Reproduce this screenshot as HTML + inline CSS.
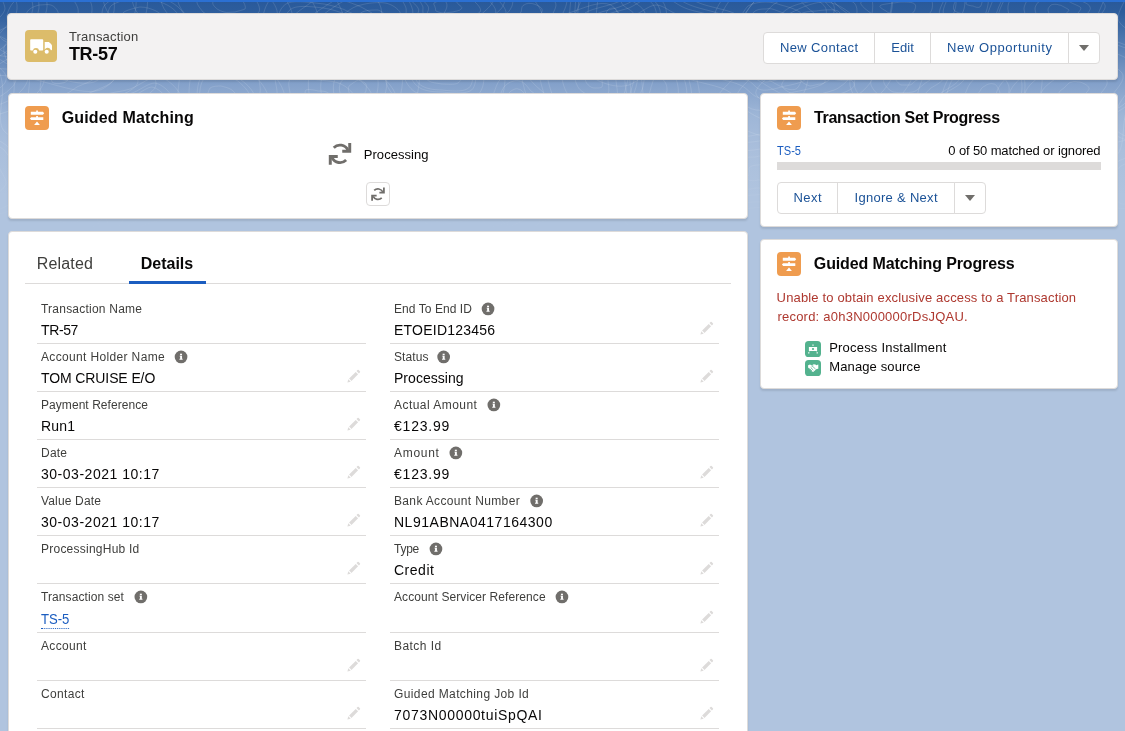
<!DOCTYPE html>
<html lang="en"><head><meta charset="utf-8"><title>TR-57 | Transaction</title>
<style>
html,body{margin:0;padding:0}
body{width:1125px;height:731px;overflow:hidden;position:relative;background:#B0C4DF;font-family:"Liberation Sans", sans-serif;color:#080707}
#page{position:absolute;left:0;top:0;width:1125px;height:731px;overflow:hidden;will-change:transform;background:#B0C4DF}
.abs{position:absolute}
.t{white-space:nowrap}
.band{left:0;top:0;width:1125px;height:200px;background:linear-gradient(to bottom,#29599A 0,#2D5D9C 12px,#4E78AF 40px,#84A1CA 84px,#9EB6D7 115px,#AABFDC 150px,#B0C4DF 195px)}
.topbar{left:0;top:0;width:1125px;height:2px;background:#2B70D3}
.card{background:#fff;border-radius:4px;box-shadow:0 2px 2px 0 rgba(0,0,0,.10);border:1px solid #dddbda;box-sizing:border-box}
.btn{box-sizing:border-box;background:#fff;border:1px solid #dddbda;color:#1B5297;font-size:13px;text-align:center;height:32px;line-height:30px;white-space:nowrap}
.lab{color:#3e3e3c}
.link{color:#1B5DC0}
.hr{height:1px;background:#dddbda}
.tri{width:0;height:0;border-left:5px solid transparent;border-right:5px solid transparent;border-top:6.500px solid #706E6B}
</style></head><body><div id="page">
<div class="abs band"></div>
<svg class="abs" style="left:0;top:0" width="1125" height="240" viewBox="0 0 1125 240" fill="none" stroke="url(#pg)" stroke-width="1"><defs><linearGradient id="pg" gradientUnits="userSpaceOnUse" x1="0" y1="0" x2="0" y2="235"><stop offset="0" stop-color="#fff" stop-opacity=".12"/><stop offset=".5" stop-color="#fff" stop-opacity=".12"/><stop offset="1" stop-color="#fff" stop-opacity="0"/></linearGradient></defs><path d="M-21 7C-20 5 -21 -1 -20 -2C-19 -3 -16 0 -14 1C-12 1 -10 0 -9 2C-7 3 -5 7 -5 10C-5 12 -8 15 -10 16C-11 18 -12 18 -14 19C-15 20 -17 21 -19 20C-20 19 -21 16 -21 14C-22 12 -21 10 -21 7zM-26 4C-26 -1 -27 -12 -25 -14C-23 -16 -17 -9 -13 -8C-10 -7 -6 -10 -3 -7C0 -4 5 4 5 9C4 14 -2 19 -5 22C-7 26 -10 27 -13 28C-15 29 -20 32 -22 30C-25 28 -27 22 -28 18C-28 13 -27 10 -26 4zM-34 1C-33 -8 -35 -26 -31 -30C-28 -33 -18 -22 -12 -20C-6 -18 1 -22 6 -18C11 -13 18 0 17 9C17 17 7 25 2 31C-2 36 -6 38 -11 40C-16 42 -23 46 -27 43C-31 40 -35 30 -36 23C-37 15 -35 9 -34 1zM-42 -4C-41 -16 -44 -43 -39 -48C-34 -53 -20 -37 -11 -34C-2 -31 8 -37 15 -30C22 -23 33 -4 33 8C32 20 17 33 11 40C4 48 -2 51 -9 54C-16 57 -26 63 -32 59C-39 55 -44 39 -46 28C-47 18 -44 9 -42 -4zM-46 -6C-45 -20 -48 -51 -42 -57C-36 -62 -20 -44 -10 -41C0 -37 11 -44 20 -36C28 -28 40 -6 39 8C38 21 22 36 14 44C6 53 0 56 -8 60C-16 63 -28 71 -35 66C-42 61 -48 43 -50 31C-52 19 -48 9 -46 -6zM-51 -8C-49 -24 -53 -59 -46 -66C-39 -72 -21 -52 -9 -48C2 -44 15 -52 24 -43C34 -33 48 -8 47 7C46 23 27 39 18 49C9 59 2 63 -7 67C-16 71 -30 79 -38 73C-46 68 -53 47 -55 34C-57 20 -52 9 -51 -8zM-34 76C-32 75 -30 72 -28 72C-26 72 -22 74 -21 75C-19 76 -18 77 -18 78C-18 79 -18 80 -19 81C-20 82 -22 83 -24 84C-26 85 -31 86 -33 86C-35 85 -36 83 -37 81C-39 80 -42 79 -41 78C-41 77 -36 77 -34 76zM-41 72C-37 70 -33 64 -28 64C-23 63 -16 68 -12 70C-9 73 -7 75 -6 77C-6 79 -7 82 -9 84C-11 86 -15 88 -20 90C-25 91 -34 94 -39 93C-44 92 -45 87 -48 84C-51 82 -58 79 -56 77C-55 75 -46 74 -41 72zM-49 68C-41 64 -36 56 -28 55C-21 55 -9 62 -4 66C2 69 5 73 6 76C7 80 5 84 1 87C-2 90 -7 93 -15 96C-23 98 -38 102 -45 101C-52 99 -54 91 -58 87C-63 83 -74 79 -72 75C-70 72 -56 71 -49 68zM-55 64C-45 60 -38 49 -28 48C-18 48 -4 57 4 62C11 66 15 71 16 75C17 80 15 85 10 89C6 93 -1 98 -11 101C-21 104 -41 109 -50 108C-60 106 -62 95 -68 90C-74 84 -88 79 -86 74C-83 70 -64 69 -55 64zM-62 60C-50 55 -41 40 -28 40C-16 39 3 51 12 57C21 63 26 69 28 74C29 80 26 86 20 92C15 97 7 103 -6 106C-19 110 -44 118 -56 115C-68 113 -71 99 -78 92C-86 85 -104 78 -101 73C-98 68 -74 66 -62 60zM-72 55C-56 48 -44 29 -28 28C-12 27 12 43 24 50C36 58 43 66 44 73C46 81 42 89 34 96C27 102 17 109 0 114C-16 120 -49 129 -65 126C-80 123 -84 106 -93 96C-103 87 -126 78 -122 71C-119 64 -88 62 -72 55zM-23 165C-20 165 -17 165 -15 167C-13 168 -12 170 -11 172C-10 174 -7 177 -8 179C-9 182 -12 184 -15 185C-17 186 -21 184 -23 183C-26 183 -29 183 -31 181C-33 180 -33 177 -33 175C-33 172 -33 168 -32 167C-30 165 -25 165 -23 165zM-24 154C-19 154 -12 155 -8 158C-4 161 -2 165 0 169C2 174 7 180 6 184C4 189 -3 194 -8 195C-13 197 -20 194 -26 192C-31 191 -38 191 -41 188C-45 185 -46 179 -46 174C-46 169 -47 162 -43 158C-40 155 -30 154 -24 154zM-27 140C-17 140 -6 143 0 147C7 151 10 159 14 166C17 173 25 183 23 190C21 197 9 206 -0 209C-9 211 -19 205 -29 203C-38 201 -49 202 -55 197C-60 192 -62 182 -62 174C-63 165 -63 153 -57 147C-52 142 -36 140 -27 140zM-27 135C-16 135 -4 138 3 143C11 148 14 156 18 165C23 173 32 184 29 192C27 200 13 211 3 213C-7 216 -19 210 -30 207C-40 205 -53 205 -59 200C-66 194 -68 183 -68 173C-69 164 -69 150 -63 143C-56 137 -38 135 -27 135zM58 12C59 14 58 17 57 20C56 23 54 27 51 28C48 28 43 26 40 26C36 25 32 25 29 24C27 22 26 19 26 16C26 13 28 10 30 9C32 7 36 6 39 5C43 5 48 4 51 5C54 6 57 9 58 12zM77 6C80 12 77 19 74 25C72 30 68 39 62 41C56 43 45 39 37 37C29 36 19 37 14 33C9 30 7 22 7 16C8 10 11 4 16 -0C20 -4 29 -6 36 -7C44 -9 55 -11 62 -9C68 -7 75 1 77 6zM91 3C94 11 90 20 87 28C83 36 78 48 70 51C61 54 46 47 35 46C24 44 10 45 3 40C-4 35 -6 24 -6 16C-6 8 -1 -1 5 -6C12 -12 24 -14 34 -16C45 -18 60 -22 69 -19C79 -15 88 -5 91 3zM113 -3C117 8 112 22 106 33C101 45 94 62 82 67C70 71 48 61 32 59C16 56 -4 58 -14 51C-24 43 -28 27 -27 16C-27 5 -20 -9 -11 -16C-1 -24 15 -28 31 -30C46 -33 67 -38 81 -34C95 -29 109 -14 113 -3zM134 -9C140 6 132 23 126 38C119 53 110 76 94 82C78 87 50 75 29 71C8 68 -18 70 -30 61C-43 52 -49 31 -48 16C-47 2 -39 -16 -26 -26C-14 -36 8 -40 27 -44C47 -48 75 -54 93 -49C110 -43 129 -23 134 -9zM145 -12C152 5 143 24 136 41C128 58 118 83 100 90C82 96 50 82 27 78C4 74 -25 77 -39 66C-54 56 -60 32 -59 16C-58 -0 -49 -20 -35 -31C-21 -42 3 -47 26 -52C48 -56 79 -63 99 -57C119 -50 139 -28 145 -12zM62 83C59 84 54 84 52 82C51 81 52 76 52 74C52 71 49 68 50 66C51 64 55 63 58 63C61 62 63 62 66 63C68 64 69 66 71 67C73 69 78 72 78 74C78 76 72 78 69 79C67 81 65 83 62 83zM62 95C57 96 45 97 42 93C38 90 42 81 41 75C40 70 35 64 37 60C39 56 48 54 54 53C59 52 65 52 69 53C74 55 77 59 81 62C85 66 96 72 95 77C94 81 83 84 77 87C72 90 68 94 62 95zM63 108C54 110 36 110 31 105C25 100 31 86 29 77C28 69 20 59 23 54C26 48 40 44 49 42C57 41 67 41 74 43C81 46 85 51 91 57C98 63 114 73 114 79C113 85 94 90 86 95C77 100 72 107 63 108zM63 125C50 128 24 128 16 121C8 113 16 93 14 80C12 67 0 53 5 45C10 36 30 31 43 29C55 26 69 26 79 30C90 33 95 41 105 50C115 59 139 73 138 82C136 92 109 99 97 106C84 113 76 123 63 125zM63 138C47 141 15 142 5 132C-5 123 5 97 2 82C0 66 -15 49 -9 38C-3 28 23 21 38 18C53 15 70 15 83 19C96 24 103 34 115 45C128 55 158 73 156 85C154 97 120 106 105 114C89 123 80 135 63 138zM77 193C77 195 76 197 75 198C73 200 71 202 68 202C66 202 62 201 61 199C59 198 58 196 58 194C58 192 58 190 59 189C60 188 62 187 64 186C65 186 67 186 69 186C71 186 74 186 76 187C77 188 77 191 77 193zM88 193C88 197 87 202 83 205C80 208 74 213 70 213C65 213 58 210 54 207C51 204 49 200 48 196C48 193 49 189 51 186C53 184 57 182 60 181C63 179 67 179 71 179C75 179 82 179 85 182C88 184 88 189 88 193zM99 194C98 200 96 206 92 211C87 216 78 223 71 223C64 224 53 219 48 215C42 210 40 203 39 198C38 193 40 187 43 183C46 179 52 177 57 175C62 173 67 172 73 173C79 173 90 173 94 176C99 180 99 188 99 194zM112 195C111 203 109 212 102 219C95 226 83 236 72 236C62 237 47 230 40 224C32 218 29 208 28 201C27 193 29 185 33 180C37 174 45 170 52 168C60 165 67 164 76 165C85 165 100 165 106 170C112 175 113 186 112 195zM130 196C129 207 125 220 116 230C107 240 89 253 75 254C60 255 39 245 29 237C18 228 14 215 12 204C10 194 14 183 20 175C25 167 37 162 47 158C57 155 67 153 79 154C92 154 113 154 121 161C130 168 131 184 130 196zM133 26C132 25 132 23 132 22C132 20 132 18 133 17C135 16 139 15 142 15C144 14 148 16 150 17C152 17 153 19 154 20C154 22 154 23 152 24C151 25 150 27 148 27C146 28 143 28 140 28C138 28 134 27 133 26zM123 30C121 28 122 24 122 21C122 18 121 14 124 12C127 10 135 8 140 7C146 7 152 9 156 11C160 13 163 16 164 19C165 21 163 24 161 26C159 29 156 31 152 32C148 33 143 34 138 33C133 33 126 32 123 30zM110 35C105 32 108 26 108 21C108 16 107 9 112 5C117 2 129 -2 138 -3C147 -3 159 1 165 4C172 7 177 12 179 16C180 21 178 26 174 30C171 33 164 37 158 39C151 41 142 41 134 41C126 40 114 38 110 35zM104 37C99 33 102 26 102 20C102 15 101 7 107 3C112 -2 127 -6 138 -7C148 -7 161 -3 169 1C177 5 183 11 185 16C186 20 183 27 179 31C175 35 168 39 160 41C153 44 142 45 133 44C124 43 110 41 104 37zM135 113C134 112 133 111 133 110C133 109 132 107 133 106C134 105 136 105 138 105C140 104 142 102 144 102C146 102 148 105 148 106C149 107 148 109 147 110C147 111 146 112 145 113C144 114 141 115 140 114C138 114 136 113 135 113zM130 117C128 115 126 113 126 111C125 108 123 105 125 103C127 101 132 102 136 100C139 99 144 94 148 95C152 95 156 100 157 103C159 105 156 108 155 111C154 113 153 116 150 117C148 119 143 121 140 120C136 120 132 118 130 117zM125 121C121 118 119 115 118 111C117 108 115 102 117 100C120 97 127 98 133 96C139 94 147 87 152 87C158 88 165 95 167 99C168 103 164 108 163 112C161 116 159 119 156 122C152 124 145 127 140 126C134 126 128 123 125 121zM122 123C118 120 115 116 114 112C112 108 110 101 113 98C116 95 125 96 132 93C139 91 148 83 155 83C162 84 170 92 172 97C174 102 169 108 167 113C165 117 163 121 159 124C154 127 146 130 139 130C133 130 126 126 122 123zM117 126C112 123 109 118 107 112C105 107 102 99 106 95C110 92 121 92 130 89C139 86 150 76 159 77C167 78 177 88 180 94C182 100 177 108 174 113C171 119 169 125 163 128C157 132 147 135 139 135C132 135 123 130 117 126zM133 179C135 179 138 181 140 183C142 185 145 187 145 189C146 192 144 195 142 197C140 199 138 199 135 200C132 201 128 204 126 204C124 203 123 198 122 196C121 193 119 191 119 188C119 186 121 182 123 180C125 179 130 178 133 179zM133 166C139 167 144 171 148 175C152 179 158 183 158 188C159 193 156 200 152 203C149 206 143 206 138 209C133 211 125 218 120 216C116 215 115 205 112 200C110 195 106 191 106 186C106 180 110 173 114 169C119 166 128 165 133 166zM134 152C143 154 150 161 157 166C163 172 172 179 173 186C174 193 169 204 163 210C158 215 149 215 141 218C133 222 121 232 114 230C107 228 105 213 102 205C98 197 91 191 92 183C92 175 97 163 104 158C111 153 125 151 134 152zM135 142C146 144 155 153 163 160C172 167 182 176 183 185C185 194 178 208 172 214C165 221 154 221 144 225C133 230 118 243 109 241C101 238 98 219 94 209C89 199 81 191 81 180C82 170 88 155 97 149C106 143 124 141 135 142zM235 12C231 12 227 13 224 12C221 11 218 10 216 8C214 6 212 4 213 2C214 0 217 -2 219 -3C222 -4 227 -3 230 -3C234 -2 236 -2 239 -1C241 -0 243 1 244 3C245 5 246 8 245 9C243 10 238 11 235 12zM239 19C232 20 224 20 218 19C213 18 207 15 203 12C200 8 196 4 197 0C199 -3 204 -8 210 -10C215 -11 225 -9 231 -9C237 -8 242 -7 246 -6C251 -4 255 -1 257 2C259 5 261 11 258 13C255 16 246 18 239 19zM244 27C234 29 221 30 212 28C202 26 193 21 187 16C182 11 177 4 178 -2C180 -7 189 -15 198 -18C207 -20 222 -17 231 -16C241 -15 249 -14 256 -11C263 -9 269 -4 272 1C276 6 280 15 275 19C270 23 255 25 244 27zM249 35C235 37 218 38 206 36C193 34 181 27 174 20C166 13 159 4 162 -4C164 -11 176 -22 188 -25C199 -28 219 -24 232 -23C244 -21 255 -20 264 -16C273 -13 282 -7 286 -0C290 6 296 18 290 24C283 30 263 33 249 35zM257 47C237 50 213 53 196 50C178 46 160 36 150 27C139 17 129 4 133 -7C136 -18 153 -33 170 -37C186 -42 214 -36 232 -34C251 -32 266 -30 279 -25C292 -20 304 -12 310 -2C316 7 324 24 315 32C306 41 276 45 257 47zM265 60C239 64 208 68 185 63C162 59 139 46 126 34C112 21 99 4 104 -10C108 -24 130 -44 152 -49C173 -55 209 -48 233 -45C257 -43 277 -41 293 -34C310 -27 326 -16 334 -4C342 9 352 30 340 41C329 51 290 57 265 60zM229 103C230 105 229 108 227 110C226 111 224 111 222 112C220 113 217 115 216 114C215 114 215 109 214 107C214 105 214 104 214 102C214 101 214 98 215 97C217 96 219 96 221 96C222 96 224 96 226 98C227 99 229 101 229 103zM240 102C241 106 239 113 236 116C233 120 228 119 224 121C220 123 214 128 211 126C208 125 209 115 208 110C207 106 207 104 207 100C207 97 208 91 210 88C213 86 218 86 221 86C225 87 229 88 232 90C235 93 239 97 240 102zM252 100C253 107 250 119 246 124C241 129 233 129 227 132C220 134 210 143 205 140C201 137 202 121 201 114C200 107 199 104 199 98C200 92 200 83 204 79C208 75 216 75 222 76C228 76 234 78 239 82C244 86 251 94 252 100zM256 100C257 108 253 120 249 126C244 132 235 132 228 135C220 137 209 147 204 144C199 141 200 123 199 115C198 108 196 104 197 97C197 91 198 80 202 76C207 72 216 72 222 73C229 73 236 75 241 80C247 84 255 92 256 100zM269 99C270 109 265 126 259 134C252 142 240 141 230 145C220 150 205 162 198 158C192 154 193 130 191 119C190 109 188 104 189 95C189 86 190 72 196 66C202 61 214 61 223 61C232 62 241 65 249 71C257 77 267 88 269 99zM285 97C287 111 280 133 271 144C263 154 247 154 234 159C220 164 200 182 191 176C182 170 184 138 182 125C180 111 177 104 178 92C179 80 181 62 188 54C196 47 212 47 224 48C236 49 248 52 258 60C269 68 283 83 285 97zM210 177C213 177 214 178 216 179C218 180 222 180 223 181C224 183 221 185 220 186C220 188 220 190 218 191C216 192 212 193 210 193C207 192 206 190 205 188C204 187 203 186 203 184C202 182 201 179 203 178C204 177 208 177 210 177zM208 169C214 169 217 171 221 173C226 174 235 175 237 178C238 181 233 185 231 189C229 193 229 198 225 200C221 203 212 205 207 204C202 203 198 197 195 193C193 190 191 188 191 184C190 180 188 174 191 171C194 169 203 168 208 169zM207 160C214 161 219 165 226 167C234 169 247 171 250 175C252 179 244 186 241 192C238 197 238 205 232 209C225 212 211 216 204 214C196 212 191 203 187 198C183 193 181 189 179 184C178 178 175 168 179 164C184 160 199 160 207 160zM206 158C215 158 220 162 228 165C236 168 252 169 255 174C257 178 248 186 245 193C241 199 241 208 234 212C227 216 211 220 203 218C194 216 188 206 184 200C179 194 177 190 175 184C174 177 170 166 175 162C180 157 197 157 206 158zM328 24C330 25 332 26 332 27C332 28 330 30 328 31C327 31 325 31 323 32C321 33 318 35 315 35C313 35 311 32 310 31C309 29 310 28 310 27C311 25 311 23 313 22C315 21 319 22 322 22C324 23 326 23 328 24zM336 20C339 21 344 24 345 27C345 29 339 32 336 34C333 35 330 35 326 37C321 38 314 43 309 43C305 42 300 37 299 34C297 31 297 28 298 25C299 22 300 17 304 15C308 14 317 15 322 16C328 17 332 18 336 20zM345 14C351 17 359 22 359 26C359 29 351 34 346 37C341 40 336 40 329 42C321 45 309 52 302 52C295 51 288 43 285 38C282 33 283 28 284 23C285 18 287 10 293 8C300 5 315 7 323 8C332 9 339 12 345 14zM349 12C357 15 367 21 367 25C367 30 357 35 351 39C345 42 339 42 330 45C321 48 307 57 298 56C289 56 281 46 277 40C274 34 275 28 277 22C278 16 280 6 288 3C296 0 314 3 324 4C334 6 342 8 349 12zM359 6C369 11 382 18 382 24C383 30 369 38 361 42C353 47 345 47 333 51C322 55 302 67 290 66C279 65 267 51 263 44C258 36 259 28 262 20C264 12 266 -1 277 -5C287 -9 311 -5 325 -4C338 -2 349 2 359 6zM306 98C306 96 304 92 306 90C308 89 315 90 318 91C322 91 326 91 328 93C331 94 333 96 335 98C336 101 337 105 335 106C333 108 327 108 323 109C319 110 314 112 311 111C308 111 305 107 304 105C303 103 305 101 306 98zM290 97C291 91 286 82 291 79C296 76 310 79 319 80C327 81 335 81 341 84C347 87 352 91 355 97C357 102 359 110 355 114C351 118 338 118 329 120C320 122 309 127 302 125C295 124 289 115 287 111C285 106 290 102 290 97zM277 95C278 87 271 73 278 68C285 64 307 69 319 70C332 71 343 72 352 76C361 80 369 87 372 95C376 102 379 115 373 121C367 127 347 127 334 130C321 133 305 140 294 138C284 135 275 123 272 116C269 109 276 103 277 95zM260 93C262 82 251 61 261 56C271 50 302 56 320 57C337 59 353 60 366 66C378 72 390 82 395 93C400 103 405 121 396 130C387 138 359 138 341 142C322 146 299 157 285 153C270 150 257 132 253 122C249 112 259 104 260 93zM288 190C288 189 289 187 291 186C293 185 296 184 298 184C301 185 304 186 305 188C306 189 306 191 306 192C306 194 306 196 304 197C303 198 300 199 298 199C295 200 291 200 289 199C288 198 288 195 288 194C288 192 287 191 288 190zM280 188C281 185 283 182 286 180C290 178 296 177 301 177C305 178 311 181 313 183C316 186 315 189 315 192C315 195 315 199 312 201C309 203 304 205 299 206C294 207 286 207 283 205C280 204 281 198 280 195C280 192 279 190 280 188zM270 185C271 181 274 176 280 173C285 170 296 167 304 168C311 168 320 174 324 178C328 182 328 188 327 193C327 197 327 203 322 207C318 211 309 213 301 215C293 216 280 217 275 214C270 211 271 202 270 197C269 193 268 189 270 185zM265 184C267 179 270 173 277 169C284 166 297 162 305 163C314 164 325 170 329 175C334 180 333 187 333 193C333 198 332 205 327 210C322 214 312 217 302 219C293 220 277 221 271 218C265 214 267 204 266 198C265 193 263 189 265 184zM246 179C249 171 254 161 265 155C276 150 297 144 311 145C325 147 342 157 350 165C357 173 356 184 356 193C355 202 354 213 346 220C338 227 321 233 306 235C291 237 266 239 256 234C246 228 249 211 247 202C245 193 243 187 246 179zM385 15C386 16 384 18 383 19C382 21 381 22 378 23C376 24 372 25 369 25C365 25 359 25 357 24C355 23 354 20 354 19C354 17 357 16 359 15C360 13 362 12 365 11C369 10 375 10 378 10C381 11 384 13 385 15zM400 12C401 15 397 18 395 21C393 23 391 26 386 28C382 29 375 31 368 32C361 32 350 32 345 30C340 27 338 22 339 19C339 16 344 14 348 11C351 9 355 6 361 5C367 3 379 2 385 3C392 4 398 9 400 12zM418 8C421 12 414 18 411 22C407 27 403 31 396 34C389 37 378 40 367 40C355 41 337 40 329 37C321 33 319 25 320 20C320 16 328 11 334 7C340 3 346 -1 356 -3C366 -6 384 -8 395 -6C405 -5 415 3 418 8zM428 6C431 11 423 18 419 23C415 28 410 33 401 37C392 40 379 44 366 45C353 45 330 44 321 40C311 36 308 27 309 21C310 15 320 10 327 5C334 1 341 -5 353 -8C365 -11 387 -14 400 -11C412 -9 424 -0 428 6zM446 2C450 9 440 18 434 25C429 32 423 38 411 43C400 47 382 52 365 53C347 54 318 53 305 48C293 42 289 29 290 22C292 14 304 8 313 1C323 -5 332 -12 348 -16C364 -20 393 -24 409 -21C425 -18 442 -6 446 2zM349 92C348 90 348 88 349 86C350 85 352 84 353 83C355 82 357 80 359 80C361 80 364 82 366 84C367 86 366 89 366 91C365 93 363 95 362 96C360 97 358 98 356 98C355 98 353 97 352 96C350 95 349 93 349 92zM340 93C339 90 339 85 341 82C342 79 347 78 350 76C354 74 359 68 363 69C367 69 374 73 377 77C379 81 378 89 377 93C375 97 371 101 368 103C365 106 360 107 356 107C353 107 349 104 346 102C344 100 341 97 340 93zM334 95C333 90 333 83 335 79C337 75 343 73 348 70C353 67 360 60 366 61C372 61 381 67 384 72C388 78 387 88 385 94C383 100 377 105 372 109C368 112 362 113 357 113C352 113 347 110 343 107C339 104 335 99 334 95zM322 97C320 90 320 79 324 73C328 67 336 65 344 60C352 55 362 45 371 45C380 46 395 55 399 63C404 72 403 87 400 96C397 106 388 113 381 118C374 123 365 126 357 125C349 125 342 120 336 116C330 111 324 104 322 97zM310 99C308 90 307 75 312 67C317 58 329 55 340 49C350 43 364 28 376 29C389 30 409 42 415 54C422 65 420 86 416 99C411 111 400 122 390 128C381 135 368 139 357 138C347 137 336 131 328 125C321 118 313 109 310 99zM356 185C358 184 362 184 365 184C368 184 371 184 374 185C377 185 383 186 383 187C384 188 378 190 377 191C375 192 376 194 373 195C371 195 365 195 362 195C359 194 358 193 356 192C355 191 352 190 352 189C351 188 353 186 356 185zM343 181C348 179 356 178 363 178C370 178 377 178 384 179C391 180 403 183 404 185C405 187 393 190 390 193C386 196 387 200 382 201C376 203 364 203 357 201C351 200 349 197 345 195C341 192 334 190 334 188C334 186 338 182 343 181zM329 175C337 173 350 172 361 171C372 171 384 171 395 173C406 175 427 179 428 183C430 186 410 191 404 196C398 200 400 207 391 209C383 211 362 211 352 209C342 207 338 202 332 198C326 194 315 191 314 187C314 184 321 178 329 175zM326 174C335 171 349 170 361 170C373 170 385 170 397 172C409 174 431 178 432 182C434 186 413 191 407 196C400 201 402 208 393 210C384 213 362 212 351 210C341 209 336 203 330 199C323 195 311 191 311 187C310 183 318 177 326 174zM435 7C435 6 433 4 434 3C436 2 440 0 443 0C446 -0 451 -0 453 1C456 1 458 3 459 5C461 6 463 8 461 9C460 11 455 11 453 12C450 12 447 13 444 13C441 13 438 12 436 11C435 10 436 9 435 7zM423 7C422 4 418 0 421 -2C423 -5 432 -7 439 -8C446 -9 456 -8 462 -7C468 -5 472 -2 475 2C478 5 482 9 480 12C477 15 466 16 460 17C454 19 448 20 442 20C436 20 428 18 425 16C422 14 423 10 423 7zM412 8C411 3 405 -3 409 -6C413 -10 426 -14 436 -15C446 -16 460 -15 469 -13C477 -11 483 -5 488 -1C492 4 498 10 495 14C491 18 476 20 467 22C457 24 449 26 440 26C432 26 420 23 415 20C411 17 414 12 412 8zM406 8C404 2 397 -5 402 -9C406 -13 422 -18 434 -19C446 -21 463 -20 474 -17C484 -14 491 -8 496 -2C501 3 509 11 505 16C500 20 482 23 471 25C460 28 449 30 439 30C429 29 415 26 409 22C404 19 407 13 406 8zM381 8C379 -0 367 -12 375 -19C382 -26 407 -33 427 -35C446 -37 474 -36 490 -32C507 -27 518 -17 527 -8C535 1 547 14 540 21C533 29 503 33 486 36C468 40 451 45 435 44C418 43 396 38 387 32C378 26 383 16 381 8zM449 70C450 71 450 72 451 73C451 74 450 76 449 77C447 78 444 77 442 77C440 77 438 77 436 76C435 75 434 74 434 73C434 72 435 71 436 70C436 69 436 65 438 65C439 64 443 66 445 67C447 67 448 69 449 70zM457 67C459 69 461 71 461 74C462 77 461 81 458 83C455 85 447 84 442 84C437 83 432 83 429 81C426 80 425 76 424 74C424 72 426 70 428 67C429 64 428 57 432 56C435 54 445 58 449 60C453 62 455 64 457 67zM466 64C469 67 472 71 473 75C473 79 472 87 467 89C462 92 450 91 442 90C435 90 427 89 422 86C418 84 415 79 414 75C414 71 417 69 419 64C421 60 420 48 426 46C432 44 447 50 453 53C460 56 462 60 466 64zM469 63C472 67 476 71 476 75C476 80 475 89 470 91C464 94 451 93 442 92C434 92 425 91 420 88C415 85 411 80 411 75C410 71 414 69 417 63C419 58 418 45 424 43C430 41 447 47 455 50C462 54 465 58 469 63zM474 61C479 66 484 70 484 76C484 82 483 92 476 96C469 99 453 97 442 97C432 96 421 95 415 92C409 88 405 81 404 76C403 71 408 68 411 62C414 55 412 40 420 37C428 34 448 42 457 46C467 50 470 55 474 61zM491 55C497 62 505 69 505 78C505 87 503 102 493 108C482 113 458 110 443 109C427 108 411 107 401 102C392 96 386 86 385 78C384 71 391 66 395 56C399 46 397 23 409 19C421 15 452 26 465 32C479 38 484 47 491 55zM440 201C444 200 450 200 452 200C455 201 455 204 456 205C456 207 458 209 457 210C455 211 451 212 448 212C445 213 441 214 439 213C436 213 434 211 433 210C431 209 428 208 428 207C428 206 432 204 434 203C436 203 437 201 440 201zM438 193C446 192 459 190 465 192C471 194 471 199 473 203C475 207 478 211 475 213C472 216 462 217 455 219C448 220 440 222 434 221C428 220 424 216 421 214C417 211 410 209 411 206C411 204 418 201 423 199C427 197 431 194 438 193zM438 189C446 188 464 186 471 188C479 190 479 197 481 202C483 207 488 212 484 215C481 218 467 220 459 222C450 223 439 226 432 225C425 224 420 219 415 216C410 213 402 209 402 206C403 203 412 200 418 197C424 194 429 191 438 189zM435 178C449 176 478 172 490 176C501 179 502 192 505 199C509 206 517 215 511 220C505 226 483 228 469 231C455 234 438 238 426 236C414 234 406 226 398 221C390 216 377 210 378 205C378 200 393 195 403 190C412 186 420 180 435 178zM434 174C450 171 483 168 496 172C509 176 510 190 514 198C518 206 526 216 519 222C513 228 489 231 473 234C457 237 437 242 424 240C410 238 401 229 392 223C383 217 368 211 369 205C370 199 387 193 397 188C408 183 417 177 434 174zM432 167C452 163 492 159 508 164C524 169 525 186 530 196C535 206 545 218 537 225C529 233 499 237 480 240C460 244 436 250 419 247C403 245 392 234 381 227C370 219 352 212 353 204C354 197 374 190 387 184C401 178 412 170 432 167zM540 16C539 18 539 19 537 20C536 22 533 22 531 22C528 23 524 25 522 24C519 23 517 20 517 18C517 16 520 14 521 12C522 10 521 6 524 5C526 3 531 3 534 4C537 5 541 7 542 9C543 11 541 14 540 16zM552 16C550 21 549 24 546 27C542 29 537 30 532 31C526 32 517 36 512 34C507 33 502 25 502 21C502 16 509 13 511 8C514 4 512 -5 516 -8C521 -10 532 -10 539 -9C545 -7 553 -2 555 2C558 6 553 12 552 16zM561 17C559 23 557 28 552 32C548 35 541 36 533 38C525 40 511 45 504 43C497 40 490 29 489 23C489 17 500 12 503 6C507 -1 503 -13 510 -17C517 -21 533 -21 542 -19C552 -17 563 -10 566 -4C569 2 564 11 561 17zM573 18C570 26 568 33 561 38C554 43 545 45 534 47C522 50 504 57 494 53C484 50 474 35 474 26C473 18 488 11 493 2C497 -7 493 -24 502 -30C511 -36 534 -36 547 -33C560 -29 576 -20 580 -11C585 -3 577 10 573 18zM513 110C511 109 509 107 509 106C509 104 511 102 511 100C512 99 512 97 513 97C514 96 516 95 518 95C519 95 520 97 521 98C522 99 524 100 524 102C525 103 524 105 523 106C522 108 521 111 519 112C518 112 515 111 513 110zM510 116C507 114 502 112 502 109C501 106 505 102 506 99C508 96 508 93 510 92C512 90 516 88 518 89C521 89 523 92 525 94C527 96 531 98 531 101C532 104 530 107 528 110C526 113 525 120 522 121C519 122 513 118 510 116zM505 125C500 122 493 118 492 113C491 108 497 101 499 97C502 92 502 88 506 85C509 82 515 80 519 81C523 81 527 86 530 90C533 93 539 96 540 101C541 105 538 110 535 115C532 121 529 131 524 133C519 134 511 129 505 125zM501 134C493 130 484 124 482 117C481 111 489 101 493 95C496 88 497 82 501 79C506 75 515 71 520 72C526 74 530 80 535 85C540 90 547 94 548 100C550 106 545 113 542 120C538 128 534 142 527 144C520 147 508 139 501 134zM517 161C519 160 521 161 524 160C526 160 529 159 530 160C531 161 530 165 531 167C531 170 534 173 533 174C533 176 529 176 527 176C525 177 523 179 521 179C520 179 518 176 517 174C516 172 516 170 516 168C516 166 516 162 517 161zM511 154C513 151 519 153 523 152C527 152 534 149 536 151C539 153 536 161 537 165C538 170 544 176 543 179C541 182 534 182 530 183C526 185 522 189 519 189C515 188 512 183 510 179C508 176 508 171 508 167C509 163 508 156 511 154zM500 141C505 137 515 140 522 139C530 138 542 132 546 136C550 140 546 154 548 163C550 171 560 182 557 188C555 193 541 192 534 195C527 198 520 206 515 204C509 203 502 194 499 187C496 181 496 173 496 165C496 158 496 146 500 141zM493 132C499 127 512 130 522 129C532 128 547 121 553 126C558 131 553 149 555 161C558 172 571 186 568 193C565 201 547 199 537 203C528 207 519 217 512 216C504 214 495 202 491 193C487 184 487 174 487 164C487 154 487 138 493 132zM487 125C494 118 509 123 521 121C533 120 552 111 558 117C565 124 558 146 561 159C565 173 580 190 577 198C573 207 551 205 540 210C529 214 518 227 509 225C500 223 490 208 485 198C480 188 480 175 480 163C480 151 480 132 487 125zM477 114C485 105 506 110 521 109C536 107 559 96 568 104C576 112 568 139 571 156C575 173 595 195 591 206C586 217 558 215 544 221C530 226 517 242 505 240C493 237 480 218 474 205C468 192 468 177 468 162C469 147 468 122 477 114zM614 8C616 9 617 12 618 14C620 15 623 16 623 19C624 21 623 26 622 28C621 30 618 32 617 32C615 33 613 33 611 32C610 31 607 30 606 27C605 25 606 22 606 19C606 16 606 11 608 10C609 8 612 8 614 8zM614 -8C618 -6 620 1 623 5C627 9 634 11 635 16C636 21 634 31 631 37C629 42 624 45 620 47C616 48 612 47 608 45C604 43 598 41 596 36C595 31 596 23 596 16C597 9 597 -1 600 -5C603 -9 610 -9 614 -8zM614 -22C620 -19 623 -9 628 -3C633 3 643 6 645 13C647 21 643 36 640 44C636 52 629 57 623 59C617 61 611 60 605 57C599 54 591 50 588 43C585 35 587 23 588 13C589 3 589 -11 593 -17C598 -23 609 -24 614 -22zM615 -37C622 -34 626 -20 633 -12C640 -4 654 0 656 11C659 22 654 42 649 52C644 63 634 70 626 73C618 76 609 74 602 70C594 66 583 60 579 50C575 41 577 24 578 11C579 -3 580 -23 586 -31C592 -39 607 -40 615 -37zM615 -43C623 -39 627 -24 635 -15C642 -6 657 -2 660 10C663 22 658 44 652 55C647 67 636 75 627 78C618 81 609 79 600 74C592 70 580 64 575 53C571 42 574 25 575 10C576 -5 577 -27 583 -36C590 -45 606 -46 615 -43zM615 -50C624 -46 629 -29 637 -19C646 -10 663 -5 666 9C669 22 663 47 657 59C651 72 638 81 629 85C619 88 608 85 599 81C589 76 576 69 571 57C566 45 569 25 570 8C572 -8 572 -33 579 -43C587 -52 605 -54 615 -50zM586 82C585 80 584 75 585 73C586 71 589 71 591 70C593 69 596 68 597 69C599 69 600 72 600 74C601 76 601 78 602 80C602 82 603 85 602 87C601 88 598 88 596 88C594 88 592 88 591 87C589 86 587 84 586 82zM577 85C575 81 573 72 575 68C577 64 584 63 588 61C592 60 596 57 599 59C602 60 604 66 606 70C607 73 607 76 608 80C608 84 610 91 608 94C606 97 600 97 596 97C593 97 590 96 586 94C583 92 579 90 577 85zM565 89C562 82 559 67 562 61C565 54 577 52 583 49C590 47 597 43 602 46C607 48 610 58 613 64C615 69 616 74 616 81C617 88 619 100 616 104C613 109 603 109 597 109C592 109 586 108 581 104C575 101 568 97 565 89zM552 94C548 83 543 62 548 53C552 43 569 40 578 37C588 33 598 28 605 31C612 35 617 49 620 57C624 65 624 72 625 82C626 92 630 108 625 115C621 122 607 122 598 122C590 122 582 120 575 115C567 110 557 104 552 94zM545 96C540 84 535 59 540 48C545 37 564 34 576 30C587 25 599 20 607 23C615 27 620 44 624 53C628 63 629 71 630 82C631 94 635 113 630 121C625 129 609 129 599 129C589 129 580 127 571 121C562 116 550 108 545 96zM529 102C522 86 515 53 522 38C528 24 554 19 569 13C584 8 600 -0 611 5C621 11 629 32 634 45C639 58 640 68 642 83C643 98 648 124 642 135C635 145 613 146 600 146C587 146 576 142 564 135C552 128 536 118 529 102zM619 163C622 163 626 162 627 163C628 164 627 166 627 168C627 169 629 171 628 172C627 173 624 175 621 175C619 176 615 174 613 173C611 173 610 171 609 170C608 169 607 168 608 166C608 165 609 163 611 163C613 162 616 163 619 163zM620 158C625 158 633 157 636 159C639 160 636 164 636 167C637 170 640 173 638 176C636 179 630 182 625 183C620 183 613 180 608 179C604 177 601 175 599 173C597 170 596 167 597 165C598 162 601 158 604 157C608 156 615 157 620 158zM621 150C630 151 644 149 648 152C653 155 648 162 649 167C650 172 656 177 652 182C649 186 638 192 629 193C621 194 609 189 602 186C594 183 589 180 586 176C583 172 581 167 583 162C584 158 588 151 595 149C601 147 612 150 621 150zM622 147C633 147 649 146 654 149C660 152 654 161 655 167C656 172 663 179 659 184C655 189 642 197 632 198C622 199 607 193 598 190C590 186 584 182 580 177C576 173 574 167 576 161C577 156 583 148 590 146C598 143 611 146 622 147zM623 139C638 140 660 138 667 142C675 147 667 158 668 166C670 174 679 183 674 190C668 197 650 207 637 209C623 210 603 202 592 198C580 193 571 187 566 181C561 174 558 166 560 159C563 152 570 141 581 138C591 135 609 139 623 139zM623 139C638 140 660 138 667 142C675 146 668 158 669 166C670 174 679 183 674 190C668 197 650 207 637 209C623 210 603 202 591 198C580 193 571 187 566 181C561 174 558 166 560 159C563 152 570 141 580 138C591 134 609 139 623 139zM671 20C672 21 671 23 669 24C667 25 662 26 659 26C656 26 652 27 649 27C646 26 643 25 642 24C641 23 640 21 641 20C642 19 645 18 648 17C650 16 653 14 656 14C658 14 661 16 663 17C666 18 671 19 671 20zM692 19C694 22 691 27 686 29C682 31 671 31 664 32C657 33 649 34 642 34C636 33 629 30 626 27C623 25 621 21 623 18C625 16 633 15 639 13C644 10 651 5 656 5C662 5 668 10 674 13C679 15 690 16 692 19zM714 18C717 22 712 30 705 33C698 37 681 38 670 39C658 40 645 42 635 41C625 40 614 35 609 31C603 27 600 21 604 17C607 13 620 11 629 8C638 4 648 -5 657 -5C667 -5 675 4 685 8C694 12 710 13 714 18zM725 17C729 22 723 32 714 36C706 40 686 41 672 42C659 44 643 46 631 45C619 43 606 38 600 33C594 28 590 20 594 16C598 11 614 10 624 5C635 1 647 -10 658 -10C669 -10 679 1 690 5C702 10 721 12 725 17zM738 16C742 22 736 34 725 39C715 44 692 45 676 46C659 48 641 51 627 49C612 47 597 41 590 35C582 29 578 20 583 15C587 9 606 7 618 2C631 -3 645 -16 658 -16C671 -16 684 -3 697 2C710 8 733 10 738 16zM656 100C654 100 650 98 649 96C649 93 651 89 651 87C652 85 652 84 653 81C654 79 655 75 656 75C658 74 660 77 662 79C664 80 665 82 666 84C667 86 667 89 667 91C666 93 665 96 663 97C661 99 658 101 656 100zM653 117C648 117 640 112 639 107C637 102 641 92 643 87C644 81 644 79 646 75C648 70 651 60 654 59C658 58 663 65 667 68C671 72 674 75 676 79C678 84 679 91 678 96C677 101 673 107 669 110C665 114 658 118 653 117zM651 130C644 129 633 122 630 115C628 108 634 94 636 87C638 79 638 76 641 69C644 63 648 49 653 48C658 46 666 56 671 61C676 66 680 70 683 76C686 83 688 93 686 100C685 107 679 115 673 120C667 125 659 130 651 130zM650 137C642 136 629 128 626 119C623 111 630 95 632 87C635 78 635 74 638 66C642 59 646 43 652 41C657 39 667 51 673 56C679 62 684 67 687 74C690 82 693 94 691 102C689 111 683 120 676 125C669 131 659 138 650 137zM649 148C638 147 622 137 618 127C615 117 624 97 626 87C629 76 630 71 634 62C638 52 643 32 650 30C657 28 669 42 676 49C684 56 690 62 694 71C698 81 701 95 699 106C697 116 688 127 680 134C671 141 659 150 649 148zM657 200C656 199 656 195 657 192C657 190 656 186 658 184C660 183 663 183 666 183C668 183 671 183 673 184C674 186 675 188 675 191C676 193 677 195 676 197C676 199 673 201 671 202C670 203 667 203 665 203C662 202 659 202 657 200zM647 208C645 204 646 197 646 192C646 187 646 179 649 176C652 173 660 172 665 172C669 172 675 173 678 176C682 178 683 184 684 188C685 192 687 197 685 201C684 205 680 209 676 211C672 213 667 213 662 213C658 212 650 211 647 208zM637 215C633 210 634 199 635 191C635 183 634 172 639 167C644 162 656 161 663 161C671 161 679 162 684 166C689 171 691 179 693 185C695 192 697 199 695 205C693 211 687 217 681 220C675 223 667 224 660 223C653 222 641 221 637 215zM626 223C621 216 623 201 624 190C624 180 623 164 629 158C636 151 652 150 662 150C672 150 684 152 690 157C697 163 699 174 702 183C704 191 708 202 705 209C702 217 694 226 686 230C678 234 667 235 657 234C648 232 632 230 626 223zM757 26C758 24 759 21 761 20C763 18 765 18 767 18C769 18 771 18 773 19C775 20 780 21 781 23C781 25 778 28 777 31C776 34 776 39 774 40C772 41 768 38 766 37C763 36 762 35 760 33C759 31 757 28 757 26zM746 25C746 21 750 15 754 12C757 9 762 9 766 9C770 8 773 9 778 11C782 13 793 15 794 19C795 23 789 30 786 36C784 42 784 53 780 55C777 57 768 50 763 48C759 45 755 43 752 40C749 36 746 30 746 25zM738 25C739 19 744 10 748 6C753 3 760 2 766 2C771 2 775 3 781 5C788 7 801 10 803 16C805 21 796 31 793 39C790 47 790 62 785 65C780 68 768 59 762 55C755 52 750 49 746 44C742 39 738 31 738 25zM719 23C720 13 729 -0 736 -7C743 -13 755 -14 764 -14C773 -14 780 -13 790 -9C800 -5 823 -1 826 9C829 18 814 33 809 47C804 60 804 84 796 89C787 93 768 79 758 73C747 68 739 64 732 55C726 47 719 34 719 23zM713 23C713 11 723 -4 732 -11C740 -18 753 -19 763 -20C774 -20 781 -18 793 -14C805 -9 830 -4 834 6C837 17 820 34 814 49C809 65 809 92 800 97C790 102 768 86 756 79C744 73 735 69 728 59C720 50 712 35 713 23zM786 77C785 78 779 79 776 80C772 81 768 82 765 82C762 81 761 79 758 78C756 76 750 76 749 74C748 73 752 71 755 70C757 68 760 67 763 66C766 66 772 66 775 67C778 68 778 70 780 72C782 73 787 75 786 77zM806 79C804 82 792 85 785 86C778 88 768 91 762 90C756 89 754 84 749 81C744 79 731 77 730 75C729 72 737 68 742 66C747 63 752 59 759 58C766 57 778 58 783 60C789 62 790 66 794 69C797 72 807 77 806 79zM825 82C823 86 805 90 794 92C783 95 769 99 760 98C751 96 748 88 740 85C732 81 714 79 712 75C710 71 722 65 730 61C737 57 745 52 755 50C765 49 783 51 791 54C800 56 801 62 807 67C812 72 827 78 825 82zM854 86C851 93 824 98 807 102C791 106 770 112 756 110C743 108 738 96 726 90C714 84 687 81 684 76C681 70 700 61 710 55C721 49 733 40 749 38C765 36 791 39 804 43C817 47 818 56 827 63C835 70 857 80 854 86zM749 173C750 171 748 168 750 167C751 166 755 165 757 165C760 165 763 164 764 165C766 166 768 168 769 170C769 172 768 174 767 175C767 177 765 178 764 179C762 180 760 180 758 180C755 181 750 181 749 180C747 179 749 175 749 173zM739 173C739 169 737 163 740 160C742 157 750 157 755 157C760 156 766 154 770 156C774 158 778 163 779 167C780 170 778 175 777 178C775 181 772 184 769 186C765 188 761 188 756 188C751 189 741 191 738 188C735 186 739 178 739 173zM731 173C732 167 728 159 732 155C736 151 746 151 754 150C761 149 769 147 775 149C781 152 786 159 787 164C789 169 786 175 784 180C781 184 777 189 772 191C768 194 762 194 755 195C748 195 733 198 729 194C725 191 731 180 731 173zM722 174C722 165 717 154 722 149C727 144 742 143 752 142C761 141 773 138 781 141C788 144 795 154 797 161C799 168 796 176 792 182C789 188 784 194 777 198C771 201 763 202 753 202C744 203 724 206 719 202C714 197 721 182 722 174zM714 174C714 163 709 150 715 144C721 138 738 137 750 136C762 134 776 131 785 134C794 138 802 150 805 159C807 167 803 177 799 184C795 192 789 199 781 203C773 207 764 207 752 208C741 209 717 213 711 207C704 202 713 184 714 174zM816 18C819 17 825 17 827 18C829 19 829 22 828 24C828 26 826 26 825 28C824 30 824 33 822 34C820 35 815 33 811 32C808 31 802 31 801 29C800 28 803 25 804 24C805 22 806 21 808 20C810 19 813 18 816 18zM816 11C823 10 834 9 838 11C842 13 841 20 840 23C839 26 836 27 834 31C832 34 832 41 828 43C823 44 813 40 806 39C800 37 789 36 787 34C785 31 790 26 792 23C794 19 796 16 800 14C804 12 810 11 816 11zM816 1C827 0 846 -1 853 2C859 6 857 16 855 22C854 27 850 29 846 35C843 40 843 52 835 54C828 56 811 50 800 47C789 45 772 44 768 39C764 35 773 26 776 21C780 16 783 11 789 8C796 4 806 2 816 1zM817 -8C831 -9 858 -11 867 -7C876 -2 872 13 871 20C869 28 863 31 858 38C853 46 853 63 843 66C832 69 810 60 794 56C778 53 755 51 750 45C744 39 756 27 761 19C766 12 770 6 779 1C788 -4 802 -7 817 -8zM817 -19C837 -21 872 -24 885 -18C897 -11 892 8 890 19C888 29 879 33 872 43C866 53 866 75 852 80C838 84 807 71 786 67C766 62 734 60 727 52C720 43 736 27 742 18C749 8 754 -1 766 -7C779 -13 797 -18 817 -19zM817 -19C836 -21 872 -24 884 -17C896 -11 891 9 889 19C887 29 878 33 872 43C866 53 866 75 852 79C837 83 807 71 787 67C766 62 735 60 728 51C720 43 736 27 743 18C749 8 754 -1 767 -7C779 -13 797 -17 817 -19zM819 63C822 63 824 66 827 68C829 70 833 72 833 74C833 76 831 79 829 80C827 82 824 83 821 84C817 84 813 86 810 86C806 85 801 82 800 80C799 78 804 75 806 73C807 71 807 69 809 67C811 65 816 63 819 63zM820 50C826 50 832 58 837 61C842 65 850 69 850 73C851 77 846 83 841 86C837 90 831 91 824 93C818 95 809 98 802 97C795 96 783 90 782 86C780 82 790 75 793 71C796 66 795 62 800 59C804 55 814 50 820 50zM822 32C833 33 843 45 852 51C861 58 873 64 874 72C875 79 866 89 859 94C852 100 841 103 829 106C818 109 803 115 791 113C779 111 759 102 756 94C754 87 771 76 776 68C782 60 780 53 788 47C795 41 812 31 822 32zM824 18C838 19 852 35 863 44C875 53 891 61 893 70C894 80 882 93 873 101C863 108 849 111 834 115C818 120 798 128 782 125C766 123 740 110 737 100C733 90 756 76 763 66C770 55 768 46 778 38C788 30 810 17 824 18zM826 2C844 3 861 24 876 35C891 47 911 57 913 69C915 81 900 98 888 108C875 117 857 121 838 127C819 132 793 142 773 139C752 135 719 120 715 107C711 94 740 76 749 63C757 50 755 38 768 28C780 18 808 1 826 2zM810 173C810 170 810 168 812 166C813 164 815 163 817 161C820 160 824 158 827 158C830 158 835 160 837 162C840 164 843 168 843 171C843 174 839 178 836 179C833 181 829 183 825 183C821 183 815 183 813 181C810 180 810 175 810 173zM797 175C797 170 798 166 801 162C803 159 807 156 812 153C817 150 824 147 831 147C837 147 846 151 851 155C856 159 862 167 862 172C861 178 854 185 848 188C842 192 834 195 826 195C819 196 808 195 803 192C798 189 797 180 797 175zM780 179C779 171 782 164 786 157C790 151 797 146 805 142C813 137 825 131 836 132C847 132 861 138 870 145C878 152 889 165 888 174C887 183 875 194 865 201C855 207 841 211 828 212C816 213 797 212 789 207C781 201 780 187 780 179zM773 180C773 171 776 163 780 155C785 148 793 142 802 137C812 132 826 125 838 126C851 127 867 133 877 141C887 149 898 164 898 174C897 185 882 198 871 205C860 213 844 217 829 218C815 220 793 219 784 213C775 206 774 190 773 180zM915 9C915 11 913 13 911 14C909 16 905 18 902 18C899 18 895 15 893 14C890 13 888 13 886 11C884 10 879 7 880 6C881 4 889 4 892 3C896 3 898 2 902 2C905 2 911 2 913 3C916 4 916 7 915 9zM932 9C931 13 927 16 923 19C918 22 911 27 905 27C899 27 892 22 886 20C881 18 876 17 872 14C868 11 859 5 861 2C863 -1 879 -2 886 -3C893 -4 897 -5 904 -5C911 -5 923 -5 928 -3C933 -1 933 5 932 9zM955 9C954 16 947 21 940 26C932 32 920 40 910 40C899 41 887 31 877 28C868 24 860 22 853 17C845 12 830 2 834 -3C838 -8 864 -9 876 -11C889 -13 896 -15 908 -15C920 -15 941 -16 949 -12C957 -8 957 3 955 9zM964 9C962 17 955 23 946 29C937 35 923 45 911 45C899 45 885 35 874 30C863 26 854 24 846 19C837 13 820 1 824 -5C829 -10 859 -12 873 -14C887 -16 895 -18 909 -18C923 -18 947 -19 956 -15C965 -10 966 2 964 9zM987 9C985 19 975 28 963 36C951 44 932 58 916 58C899 59 880 44 865 38C850 32 837 30 826 22C815 14 791 -3 797 -10C803 -17 844 -19 863 -22C883 -25 894 -28 913 -28C932 -28 965 -29 977 -23C989 -17 990 -1 987 9zM902 73C905 72 908 69 911 69C914 69 918 72 919 73C921 74 920 77 920 78C919 79 917 80 915 81C914 82 913 84 910 85C908 85 903 85 901 85C899 84 897 82 896 80C896 79 896 77 897 76C898 75 900 74 902 73zM897 67C901 65 908 60 914 60C920 60 928 65 931 68C934 71 933 75 932 78C930 81 926 82 923 85C920 87 917 91 913 92C908 93 898 93 893 92C889 90 885 86 884 83C883 80 884 76 887 74C889 71 892 70 897 67zM891 62C898 58 908 51 917 51C926 51 938 58 943 62C947 67 946 74 944 78C942 82 936 85 931 88C926 92 923 98 915 100C907 101 893 101 886 99C878 96 873 90 871 85C870 81 872 75 875 71C878 68 884 65 891 62zM883 54C893 49 908 39 921 39C934 39 952 49 958 55C965 62 963 72 960 78C958 84 948 88 941 93C934 98 929 107 918 109C907 112 886 112 876 108C865 105 858 95 855 88C853 82 856 74 860 69C865 63 873 59 883 54zM881 52C892 47 908 35 922 35C936 36 956 46 963 53C970 61 968 71 965 78C962 85 951 89 944 94C936 100 931 109 919 112C907 115 884 114 873 111C861 107 853 96 851 89C848 82 851 74 856 68C861 62 870 58 881 52zM922 184C924 186 927 188 927 190C927 192 923 193 921 195C920 197 919 199 918 200C916 200 914 198 912 197C910 196 907 196 906 194C906 192 908 189 909 187C910 185 910 182 912 182C913 181 916 181 917 181C919 182 921 183 922 184zM930 177C933 180 941 186 940 190C940 194 931 197 928 201C924 205 923 211 920 212C916 213 912 208 908 206C903 204 895 203 894 199C893 195 898 188 900 184C902 179 903 173 906 171C909 169 915 170 919 171C923 172 926 174 930 177zM935 172C940 176 951 184 950 190C950 196 938 200 933 206C928 211 926 220 921 221C916 223 910 216 904 213C898 210 887 208 885 203C883 197 891 188 894 181C896 174 897 166 902 163C906 160 915 161 920 163C926 164 930 167 935 172zM945 163C953 170 968 182 967 190C967 198 948 205 941 213C934 221 931 235 923 237C916 239 907 229 898 225C889 220 872 217 869 209C867 201 878 186 882 176C887 166 888 154 895 149C902 145 914 147 923 149C931 151 938 156 945 163zM945 163C952 170 967 182 966 190C966 198 948 205 941 213C933 221 930 234 923 236C916 238 907 228 898 224C890 219 873 216 870 208C868 201 879 186 883 177C887 167 889 155 895 150C902 146 914 148 922 150C931 152 937 157 945 163zM982 2C982 3 981 6 980 7C978 8 975 7 973 6C971 6 967 5 966 4C966 2 967 -0 968 -2C968 -4 968 -5 970 -7C971 -8 974 -10 976 -10C978 -10 980 -8 982 -7C983 -5 984 -4 984 -2C984 -1 983 0 982 2zM991 5C989 9 988 15 985 17C981 19 974 17 969 15C964 14 956 13 954 10C952 6 956 1 957 -3C959 -7 958 -11 961 -14C964 -17 971 -21 975 -21C980 -21 986 -17 989 -14C992 -11 993 -7 993 -4C994 -1 992 2 991 5zM998 9C996 14 994 23 989 26C984 28 973 25 966 24C958 22 947 19 944 15C941 10 947 2 948 -4C950 -10 950 -16 954 -21C959 -25 968 -32 975 -31C982 -31 990 -24 995 -20C999 -16 1002 -10 1002 -5C1003 -0 1000 3 998 9zM1000 9C998 15 996 26 990 28C985 31 973 28 965 26C956 24 944 22 940 16C937 11 944 2 946 -5C948 -11 947 -18 952 -23C957 -28 967 -35 975 -34C982 -34 992 -27 997 -22C1002 -17 1004 -11 1005 -6C1005 -0 1002 4 1000 9zM980 91C981 89 982 87 985 86C987 84 991 83 994 84C996 84 998 88 999 90C1000 92 1000 94 1000 95C999 97 998 98 997 100C996 101 994 101 992 102C990 102 988 103 985 102C983 102 979 100 978 98C977 97 978 93 980 91zM968 87C970 83 974 78 979 76C983 73 992 71 997 72C1002 74 1006 80 1008 84C1010 88 1009 92 1008 95C1008 99 1006 102 1004 104C1001 107 997 108 993 109C989 110 984 111 980 110C975 109 967 106 965 102C963 98 966 92 968 87zM951 82C955 75 962 67 970 62C978 58 993 54 1001 56C1009 59 1017 70 1020 76C1023 83 1022 90 1021 96C1019 102 1017 107 1013 111C1008 115 1002 117 995 118C988 120 980 122 972 120C964 118 951 113 947 107C944 100 948 89 951 82zM947 81C951 72 958 64 968 59C977 54 993 50 1002 52C1011 55 1019 67 1023 75C1026 82 1025 90 1024 96C1022 102 1019 108 1015 112C1010 117 1003 119 996 121C988 123 979 125 970 123C961 121 946 115 943 108C939 101 943 89 947 81zM925 73C931 61 942 48 956 41C969 34 994 27 1008 31C1021 35 1034 53 1039 64C1044 75 1042 87 1040 96C1038 106 1034 115 1027 121C1020 128 1009 131 998 134C987 137 972 140 959 137C946 134 924 125 918 114C913 104 919 86 925 73zM983 155C983 157 983 161 982 162C980 163 977 161 975 160C974 160 972 160 971 159C969 158 966 156 966 154C966 152 970 151 971 149C972 148 973 146 974 145C975 144 978 143 980 143C982 144 984 147 984 149C985 151 984 153 983 155zM990 157C989 161 989 169 987 170C985 172 978 168 975 167C971 166 969 166 966 164C963 162 957 158 957 155C957 152 964 149 967 146C969 143 969 139 972 137C975 135 980 133 984 135C987 136 991 141 992 144C993 148 991 153 990 157zM997 159C996 166 997 177 993 180C989 182 980 177 974 175C969 173 965 174 961 170C956 167 947 161 947 156C947 151 958 146 962 142C965 137 966 132 970 129C974 126 982 123 988 125C993 126 999 134 1001 140C1002 146 999 153 997 159zM1003 161C1002 169 1002 184 998 187C993 191 981 183 974 181C967 179 962 179 956 175C951 171 939 163 939 157C939 151 953 145 958 139C963 133 963 126 968 122C974 118 984 114 991 117C997 119 1005 129 1007 136C1009 144 1005 152 1003 161zM1051 5C1053 4 1057 4 1059 5C1061 5 1062 6 1064 7C1066 8 1068 9 1069 10C1069 11 1067 12 1066 14C1065 15 1063 16 1062 16C1060 16 1059 15 1057 15C1055 15 1052 15 1050 15C1049 14 1048 11 1048 10C1048 8 1050 6 1051 5zM1042 -1C1046 -3 1054 -4 1058 -3C1063 -2 1066 0 1070 2C1073 4 1080 6 1081 8C1081 10 1077 14 1075 17C1072 19 1069 21 1065 22C1062 22 1059 20 1055 20C1050 20 1043 21 1040 19C1037 17 1035 12 1035 9C1035 5 1039 1 1042 -1zM1035 -7C1041 -10 1051 -10 1058 -9C1065 -8 1069 -5 1074 -2C1080 1 1089 3 1090 7C1092 10 1085 16 1082 19C1078 22 1073 26 1068 26C1063 27 1059 25 1053 24C1046 23 1036 25 1031 22C1027 20 1024 13 1024 8C1025 3 1029 -4 1035 -7zM1024 -15C1032 -19 1048 -20 1058 -19C1067 -17 1073 -12 1081 -8C1089 -4 1103 -1 1105 5C1107 10 1097 18 1092 23C1087 28 1080 32 1073 34C1066 35 1059 31 1050 30C1041 29 1025 32 1019 28C1012 24 1007 13 1008 6C1009 -1 1016 -11 1024 -15zM1065 87C1067 85 1069 82 1072 82C1074 81 1077 82 1080 82C1083 83 1088 85 1089 88C1090 90 1085 93 1084 96C1083 99 1084 103 1082 105C1080 107 1075 107 1072 106C1069 106 1065 105 1063 102C1060 100 1059 96 1059 93C1059 91 1063 89 1065 87zM1055 79C1059 74 1063 69 1068 68C1074 66 1081 68 1088 70C1094 72 1106 76 1107 81C1109 86 1099 94 1096 100C1094 106 1096 116 1092 119C1087 123 1076 124 1069 123C1062 122 1053 119 1049 114C1044 109 1040 100 1041 94C1042 88 1050 83 1055 79zM1045 72C1052 66 1058 58 1066 56C1074 54 1085 55 1094 59C1104 62 1121 68 1123 75C1125 83 1111 94 1107 103C1103 113 1107 127 1100 132C1093 138 1077 138 1067 137C1056 136 1043 131 1036 124C1029 117 1023 103 1025 94C1026 86 1038 78 1045 72zM1036 65C1045 57 1053 47 1063 44C1074 41 1088 43 1101 48C1113 52 1136 60 1139 69C1142 79 1123 94 1118 107C1113 119 1117 137 1108 145C1099 152 1079 153 1065 151C1051 149 1034 143 1024 134C1015 124 1007 106 1009 95C1011 83 1027 74 1036 65zM1028 59C1039 49 1048 38 1061 34C1074 30 1091 33 1106 38C1122 43 1149 53 1152 65C1156 76 1133 94 1127 109C1121 125 1126 147 1116 156C1105 165 1080 166 1063 163C1046 161 1025 153 1014 142C1003 131 993 109 996 95C998 81 1017 70 1028 59zM1061 171C1060 172 1058 173 1056 173C1055 174 1053 174 1052 173C1050 173 1047 173 1046 172C1045 170 1046 168 1046 166C1046 163 1045 160 1047 158C1048 157 1052 156 1054 156C1056 156 1060 157 1061 158C1063 160 1062 164 1062 166C1062 168 1062 170 1061 171zM1069 176C1067 179 1063 181 1059 182C1056 183 1053 182 1049 181C1045 181 1038 180 1036 178C1033 175 1035 169 1036 164C1036 159 1034 151 1037 147C1040 143 1049 142 1054 142C1060 142 1068 143 1071 147C1074 151 1072 159 1072 164C1071 169 1071 173 1069 176zM1074 178C1071 182 1065 185 1061 186C1056 187 1052 186 1047 185C1042 184 1033 184 1030 181C1028 177 1030 169 1031 163C1031 156 1029 146 1033 141C1036 137 1047 135 1054 135C1061 135 1072 137 1076 141C1080 146 1077 157 1077 163C1076 169 1076 175 1074 178zM1080 182C1076 187 1069 190 1063 192C1057 193 1052 192 1045 191C1038 190 1027 190 1023 185C1019 180 1023 170 1023 161C1024 153 1021 139 1026 133C1031 127 1045 125 1054 125C1064 125 1078 127 1083 133C1088 139 1084 154 1084 162C1083 170 1083 177 1080 182zM1090 188C1085 195 1074 199 1066 201C1058 203 1051 202 1042 200C1033 199 1016 198 1011 192C1006 185 1011 171 1011 159C1012 147 1008 129 1015 120C1022 112 1041 109 1054 109C1067 109 1087 112 1094 120C1100 129 1096 149 1095 160C1094 171 1094 181 1090 188zM1169 12C1167 13 1163 13 1160 13C1158 12 1154 11 1153 9C1152 8 1154 6 1154 4C1155 3 1156 1 1157 1C1159 -0 1161 -1 1163 -1C1166 -1 1168 -1 1170 0C1171 1 1173 2 1173 4C1174 5 1174 7 1173 8C1173 10 1171 12 1169 12zM1175 21C1170 22 1162 22 1156 21C1151 20 1143 17 1141 14C1139 11 1142 7 1143 3C1145 0 1147 -3 1150 -5C1153 -6 1159 -8 1163 -8C1167 -8 1173 -7 1176 -5C1180 -4 1182 -1 1184 2C1185 5 1186 8 1184 12C1183 15 1179 19 1175 21zM1179 28C1173 30 1161 30 1153 28C1145 27 1134 23 1131 19C1128 14 1132 7 1134 3C1136 -2 1139 -6 1144 -9C1148 -11 1156 -13 1162 -14C1169 -14 1176 -12 1181 -10C1186 -7 1190 -3 1192 1C1194 5 1195 10 1193 14C1191 19 1186 25 1179 28zM1185 36C1176 39 1160 39 1149 37C1138 35 1124 29 1120 23C1115 18 1121 8 1124 2C1126 -4 1130 -10 1136 -14C1143 -17 1153 -20 1162 -20C1170 -21 1181 -18 1188 -15C1195 -12 1200 -6 1203 -1C1205 5 1207 12 1204 18C1201 24 1194 33 1185 36zM1195 51C1181 56 1158 56 1141 52C1125 49 1104 41 1098 32C1092 24 1100 10 1104 0C1108 -9 1114 -17 1123 -23C1133 -28 1148 -32 1161 -33C1173 -33 1189 -30 1199 -25C1209 -20 1217 -12 1221 -4C1225 5 1227 15 1223 24C1218 33 1208 46 1195 51zM1144 122C1142 121 1140 119 1140 118C1140 116 1144 115 1145 114C1147 113 1148 111 1150 110C1152 110 1155 112 1157 112C1159 113 1159 114 1161 115C1163 116 1167 118 1167 119C1167 120 1161 121 1159 122C1156 123 1154 124 1152 124C1150 124 1146 123 1144 122zM1135 128C1130 126 1125 121 1125 119C1126 116 1133 113 1137 110C1140 108 1142 103 1146 103C1150 102 1157 105 1161 107C1165 108 1166 110 1170 112C1173 115 1184 119 1183 122C1183 124 1171 126 1166 127C1160 129 1156 131 1151 132C1146 132 1139 130 1135 128zM1123 135C1116 131 1108 124 1108 120C1109 115 1121 111 1126 106C1132 102 1136 95 1142 94C1149 93 1159 98 1166 101C1172 103 1174 106 1180 109C1186 113 1203 120 1202 124C1201 128 1182 131 1173 134C1165 136 1158 140 1150 140C1141 141 1130 138 1123 135zM1119 137C1112 133 1102 125 1102 120C1103 115 1116 110 1123 105C1129 100 1133 92 1141 91C1148 90 1160 96 1168 98C1175 101 1177 104 1184 108C1191 113 1210 121 1208 125C1207 130 1186 133 1176 136C1166 139 1159 144 1149 144C1140 144 1127 141 1119 137zM1141 191C1138 192 1134 193 1132 192C1129 192 1128 189 1127 187C1127 185 1128 184 1128 182C1129 180 1129 177 1131 176C1133 175 1139 173 1141 174C1144 175 1145 178 1147 180C1148 181 1152 182 1153 184C1153 185 1152 188 1150 189C1148 191 1144 191 1141 191zM1145 201C1138 202 1127 205 1122 204C1116 202 1113 195 1112 191C1111 187 1113 183 1114 179C1116 175 1116 169 1121 166C1126 163 1138 160 1144 161C1150 163 1152 171 1156 174C1161 178 1169 180 1170 183C1172 187 1168 193 1164 196C1160 199 1152 200 1145 201zM1146 205C1137 206 1125 210 1118 208C1111 206 1107 197 1106 192C1104 187 1107 183 1109 178C1111 173 1111 165 1117 162C1123 158 1138 154 1146 156C1153 158 1155 168 1160 172C1166 177 1176 179 1178 183C1179 188 1175 195 1170 199C1165 203 1155 203 1146 205zM1150 217C1136 220 1116 226 1105 223C1094 220 1088 205 1085 197C1083 189 1087 182 1090 174C1093 166 1093 154 1103 148C1113 142 1138 136 1150 139C1162 142 1165 158 1174 165C1182 172 1199 176 1202 183C1204 190 1197 202 1189 208C1180 214 1164 215 1150 217z"/></svg>
<div class="abs topbar"></div>

<div class="abs card" style="left:7px;top:13px;width:1111px;height:67px;background:#F3F2F2"></div>
<svg class="abs" style="left:25px;top:30px" width="32" height="32" viewBox="0 0 32 32"><rect width="32" height="32" rx="4" fill="#DCBC6A"/><path fill="#fff" d="M6 9.200h11.400a.8 .8 0 0 1 .8 .8v9.800a.8 .8 0 0 1-.8 .8h-3.200a3.300 3.300 0 0 0-6.400 0H6a.8 .8 0 0 1-.8-.8V10a.8 .8 0 0 1 .8-.8zM19.700 12h3.600c1.200 0 3.700 2.600 3.700 3.800v3.600a.8 .8 0 0 1-.8 .8h-.3a3.300 3.300 0 0 0-6.200-.4z"/><circle cx="10.300" cy="21.700" r="2.050" fill="#fff"/><circle cx="21.700" cy="21.700" r="2.050" fill="#fff"/></svg>
<div class="abs t lab" style="left:68.9px;top:28px;height:18px;line-height:18px;font-size:13px;letter-spacing:0.189px;">Transaction</div>
<div class="abs t " style="left:68.9px;top:42px;height:24px;line-height:24px;font-size:18px;font-weight:700;letter-spacing:-0.275px;">TR-57</div>
<div class="abs btn" style="left:763px;top:32px;width:112px;border-radius:4px 0 0 4px;"><span style="letter-spacing:0.379px;margin-right:-0.379px">New Contact</span></div>
<div class="abs btn" style="left:874px;top:32px;width:57px;"><span style="letter-spacing:0.104px;margin-right:-0.104px">Edit</span></div>
<div class="abs btn" style="left:930px;top:32px;width:139px;"><span style="letter-spacing:0.57px;margin-right:-0.57px">New Opportunity</span></div>
<div class="abs btn" style="left:1068px;top:32px;width:32px;border-radius:0 4px 4px 0;"></div>
<div class="abs tri" style="left:1079px;top:45px"></div>
<div class="abs card" style="left:8px;top:93px;width:740px;height:126px"></div>
<svg class="abs" style="left:25px;top:106px" width="24" height="24" viewBox="0 0 24 24"><rect width="24" height="24" rx="4" fill="#EF9C4F"/><path fill="#fff" d="M11.200 4.600h1.700v1.200h5l1.300 1.450-1.300 1.450H5.800V5.800h5.400zM11.200 10h1.700v1.200h5.400v2.800H6.200l-1.300-1.400 1.300-1.400h5zM12 15.600l2.900 3.500H9.100z"/></svg>
<div class="abs t " style="left:61.7px;top:106px;height:24px;line-height:24px;font-size:16px;font-weight:700;letter-spacing:0.164px;">Guided Matching</div>
<svg class="abs" style="left:328px;top:142px" width="24" height="23" viewBox="72.68 63.78 219.64 210.05" preserveAspectRatio="none"><g fill="none" stroke="#706E6B" stroke-width="26"><path d="M125.400 115.400A80 80 0 0 1 254.500 138.200"/><path d="M238.600 228.600A80 80 0 0 1 109.500 205.800"/></g><path fill="#706E6B" d="M258 72h27v89h-82v-26h55zM107 272H80v-89h82v26h-55z"/></svg>
<div class="abs t " style="left:363.8px;top:145px;height:20px;line-height:20px;font-size:13px;letter-spacing:0.036px;">Processing</div>
<div class="abs" style="left:366px;top:182px;width:24px;height:24px;box-sizing:border-box;border:1px solid #dddbda;border-radius:4px;background:#fff"></div>
<svg class="abs" style="left:371px;top:187px" width="14" height="14" viewBox="76.99 62.84 211.03 213.74" preserveAspectRatio="none"><g fill="none" stroke="#706E6B" stroke-width="26"><path d="M125.400 115.400A80 80 0 0 1 254.500 138.200"/><path d="M238.600 228.600A80 80 0 0 1 109.500 205.800"/></g><path fill="#706E6B" d="M258 72h27v89h-82v-26h55zM107 272H80v-89h82v26h-55z"/></svg>
<div class="abs card" style="left:760px;top:93px;width:358px;height:134px"></div>
<svg class="abs" style="left:777px;top:106px" width="24" height="24" viewBox="0 0 24 24"><rect width="24" height="24" rx="4" fill="#EF9C4F"/><path fill="#fff" d="M11.200 4.600h1.700v1.200h5l1.300 1.450-1.300 1.450H5.800V5.800h5.400zM11.200 10h1.700v1.200h5.400v2.800H6.200l-1.300-1.400 1.300-1.400h5zM12 15.600l2.900 3.500H9.100z"/></svg>
<div class="abs t " style="left:813.9px;top:106px;height:24px;line-height:24px;font-size:16px;font-weight:700;letter-spacing:-0.294px;">Transaction Set Progress</div>
<div class="abs t link" style="left:777.1px;top:141px;height:20px;line-height:20px;font-size:13px;transform:scaleX(0.8518);transform-origin:0 0;">TS-5</div>
<div class="abs t " style="left:948.3px;top:141px;height:20px;line-height:20px;font-size:13px;letter-spacing:-0.126px;">0 of 50 matched or ignored</div>
<div class="abs" style="left:777px;top:162px;width:324px;height:8px;background:#DDDBDA"></div>
<div class="abs btn" style="left:777px;top:182px;width:61px;border-radius:4px 0 0 4px;"><span style="letter-spacing:0.494px;margin-right:-0.494px">Next</span></div>
<div class="abs btn" style="left:837px;top:182px;width:118px;"><span style="letter-spacing:0.294px;margin-right:-0.294px">Ignore &amp; Next</span></div>
<div class="abs btn" style="left:954px;top:182px;width:32px;border-radius:0 4px 4px 0;"></div>
<div class="abs tri" style="left:965px;top:195px"></div>
<div class="abs card" style="left:760px;top:239px;width:358px;height:150px"></div>
<svg class="abs" style="left:777px;top:252px" width="24" height="24" viewBox="0 0 24 24"><rect width="24" height="24" rx="4" fill="#EF9C4F"/><path fill="#fff" d="M11.200 4.600h1.700v1.200h5l1.300 1.450-1.300 1.450H5.800V5.800h5.400zM11.200 10h1.700v1.200h5.400v2.800H6.200l-1.300-1.400 1.300-1.400h5zM12 15.600l2.900 3.500H9.100z"/></svg>
<div class="abs t " style="left:813.8px;top:252px;height:24px;line-height:24px;font-size:16px;font-weight:700;letter-spacing:-0.117px;">Guided Matching Progress</div>
<div class="abs t " style="left:776.6px;top:288px;height:20px;line-height:20px;font-size:13px;letter-spacing:0.154px;color:#AE382F;">Unable to obtain exclusive access to a Transaction</div>
<div class="abs t " style="left:777.4px;top:306.5px;height:20px;line-height:20px;font-size:13px;letter-spacing:0.229px;color:#AE382F;">record: a0h3N000000rDsJQAU.</div>
<svg class="abs" style="left:805px;top:341px" width="16" height="16" viewBox="0 0 16 16"><rect width="16" height="16" rx="3.600" fill="#53B28E"/><path fill="#fff" d="M3.900 6.100h8.200v3.900H3.900zM7.400 3.500h1.200v1.200H7.400zM3.200 11.300h1.200v1.200H3.200zM11.600 11.300h1.200v1.200h-1.200z"/><path stroke="#fff" stroke-opacity=".6" stroke-width=".6" d="M4.600 10.200l-.8 1.200M11.400 10.200l.8 1.200"/><circle cx="8" cy="8" r="1.100" fill="#53B28E"/></svg>
<svg class="abs" style="left:805px;top:360px" width="16" height="16" viewBox="0 0 16 16"><rect width="16" height="16" rx="3.600" fill="#53B28E"/><path fill="#fff" d="M3.100 5.300L5 4.600l1.800 1 1.700-1.400 2 .4.700.7 2.100-.9v4.300l-1.700.4-3.400 2.900-1.200-.5-3.900-3.900z"/><path stroke="#53B28E" stroke-width=".75" fill="none" d="M4.500 8.500l2.600 2.600M5.700 7.500l2.600 2.600M7.300 6.100l3.300 3M8.300 5.300L6.600 6.800"/></svg>
<div class="abs t " style="left:829.2px;top:338px;height:20px;line-height:20px;font-size:13px;letter-spacing:0.204px;">Process Installment</div>
<div class="abs t " style="left:829.2px;top:357px;height:20px;line-height:20px;font-size:13px;letter-spacing:0.135px;">Manage source</div>
<div class="abs card" style="left:8px;top:231px;width:740px;height:521px"></div>
<div class="abs t lab" style="left:36.8px;top:252px;height:24px;line-height:24px;font-size:16px;letter-spacing:0.158px;">Related</div>
<div class="abs t " style="left:140.8px;top:252px;height:24px;line-height:24px;font-size:16px;font-weight:700;letter-spacing:-0.012px;">Details</div>
<div class="abs hr" style="left:25px;top:283px;width:706px"></div>
<div class="abs" style="left:129px;top:281px;width:77px;height:3px;background:#1B5DC0"></div>
<div class="abs t lab" style="left:41px;top:300px;height:18px;line-height:18px;font-size:12px;letter-spacing:0.225px;">Transaction Name</div>
<div class="abs t " style="left:41px;top:320px;height:21px;line-height:21px;font-size:14px;letter-spacing:-0.378px;">TR-57</div>
<div class="abs hr" style="left:37px;top:343px;width:329px"></div>
<div class="abs t lab" style="left:41px;top:348px;height:18px;line-height:18px;font-size:12px;letter-spacing:0.349px;">Account Holder Name</div>
<svg class="abs" style="left:174px;top:350px" width="14" height="14" viewBox="-0.55 -0.40 14.00 14.00" preserveAspectRatio="none"><circle cx="6.500" cy="6.500" r="6.350" fill="#706E6B"/><rect x="5.500" y="3.300" width="2" height="1.500" fill="#fff"/><path fill="#fff" d="M5.100 5.300h2.400v3.100h.6v.9H4.900v-.9h.7V6.200h-.5z"/></svg>
<div class="abs t " style="left:41px;top:368px;height:21px;line-height:21px;font-size:14px;letter-spacing:-0.104px;">TOM CRUISE E/O</div>
<svg class="abs" style="left:347px;top:369px" width="14" height="14" viewBox="0 0 14 14"><g fill="#DDDBDA"><path d="M0.400 13.600l0.900-3.300 2.400 2.400z"/><path d="M2.100 9.500l6.600-6.600 2.400 2.400-6.600 6.600z"/><path d="M9.500 2.100l1-1a0.900 0.900 0 0 1 1.200 0l1.200 1.200a0.900 0.900 0 0 1 0 1.200l-1 1z"/></g></svg>
<div class="abs hr" style="left:37px;top:391px;width:329px"></div>
<div class="abs t lab" style="left:41px;top:396px;height:18px;line-height:18px;font-size:12px;letter-spacing:0.057px;">Payment Reference</div>
<div class="abs t " style="left:41px;top:416px;height:21px;line-height:21px;font-size:14px;letter-spacing:0.172px;">Run1</div>
<svg class="abs" style="left:347px;top:417px" width="14" height="14" viewBox="0 0 14 14"><g fill="#DDDBDA"><path d="M0.400 13.600l0.900-3.300 2.400 2.400z"/><path d="M2.100 9.500l6.600-6.600 2.400 2.400-6.600 6.600z"/><path d="M9.500 2.100l1-1a0.900 0.900 0 0 1 1.200 0l1.200 1.200a0.900 0.900 0 0 1 0 1.200l-1 1z"/></g></svg>
<div class="abs hr" style="left:37px;top:439px;width:329px"></div>
<div class="abs t lab" style="left:41px;top:444px;height:18px;line-height:18px;font-size:12px;letter-spacing:0.209px;">Date</div>
<div class="abs t " style="left:41px;top:464px;height:21px;line-height:21px;font-size:14px;letter-spacing:0.523px;">30-03-2021 10:17</div>
<svg class="abs" style="left:347px;top:465px" width="14" height="14" viewBox="0 0 14 14"><g fill="#DDDBDA"><path d="M0.400 13.600l0.900-3.300 2.400 2.400z"/><path d="M2.100 9.500l6.600-6.600 2.400 2.400-6.600 6.600z"/><path d="M9.500 2.100l1-1a0.900 0.900 0 0 1 1.200 0l1.200 1.200a0.900 0.900 0 0 1 0 1.200l-1 1z"/></g></svg>
<div class="abs hr" style="left:37px;top:487px;width:329px"></div>
<div class="abs t lab" style="left:41px;top:492px;height:18px;line-height:18px;font-size:12px;letter-spacing:0.155px;">Value Date</div>
<div class="abs t " style="left:41px;top:512px;height:21px;line-height:21px;font-size:14px;letter-spacing:0.523px;">30-03-2021 10:17</div>
<svg class="abs" style="left:347px;top:513px" width="14" height="14" viewBox="0 0 14 14"><g fill="#DDDBDA"><path d="M0.400 13.600l0.900-3.300 2.400 2.400z"/><path d="M2.100 9.500l6.600-6.600 2.400 2.400-6.600 6.600z"/><path d="M9.500 2.100l1-1a0.900 0.900 0 0 1 1.200 0l1.200 1.200a0.900 0.900 0 0 1 0 1.200l-1 1z"/></g></svg>
<div class="abs hr" style="left:37px;top:535px;width:329px"></div>
<div class="abs t lab" style="left:41px;top:540px;height:18px;line-height:18px;font-size:12px;letter-spacing:0.237px;">ProcessingHub Id</div>
<svg class="abs" style="left:347px;top:561px" width="14" height="14" viewBox="0 0 14 14"><g fill="#DDDBDA"><path d="M0.400 13.600l0.900-3.300 2.400 2.400z"/><path d="M2.100 9.500l6.600-6.600 2.400 2.400-6.600 6.600z"/><path d="M9.500 2.100l1-1a0.900 0.900 0 0 1 1.200 0l1.200 1.200a0.900 0.900 0 0 1 0 1.200l-1 1z"/></g></svg>
<div class="abs hr" style="left:37px;top:583px;width:329px"></div>
<div class="abs t lab" style="left:41px;top:588px;height:18px;line-height:18px;font-size:12px;letter-spacing:0.089px;">Transaction set</div>
<svg class="abs" style="left:134px;top:590px" width="14" height="14" viewBox="-0.35 -0.40 14.00 14.00" preserveAspectRatio="none"><circle cx="6.500" cy="6.500" r="6.350" fill="#706E6B"/><rect x="5.500" y="3.300" width="2" height="1.500" fill="#fff"/><path fill="#fff" d="M5.100 5.300h2.400v3.100h.6v.9H4.900v-.9h.7V6.200h-.5z"/></svg>
<div class="abs t link" style="left:41px;top:610px;height:18px;line-height:18px;font-size:14px;transform:scaleX(0.9361);transform-origin:0 0;border-bottom:1px dotted #1B5DC0;">TS-5</div>
<div class="abs hr" style="left:37px;top:632px;width:329px"></div>
<div class="abs t lab" style="left:41px;top:637px;height:18px;line-height:18px;font-size:12px;letter-spacing:0.346px;">Account</div>
<svg class="abs" style="left:347px;top:658px" width="14" height="14" viewBox="0 0 14 14"><g fill="#DDDBDA"><path d="M0.400 13.600l0.900-3.300 2.400 2.400z"/><path d="M2.100 9.500l6.600-6.600 2.400 2.400-6.600 6.600z"/><path d="M9.500 2.100l1-1a0.900 0.900 0 0 1 1.200 0l1.200 1.200a0.900 0.900 0 0 1 0 1.200l-1 1z"/></g></svg>
<div class="abs hr" style="left:37px;top:680px;width:329px"></div>
<div class="abs t lab" style="left:41px;top:685px;height:18px;line-height:18px;font-size:12px;letter-spacing:0.33px;">Contact</div>
<svg class="abs" style="left:347px;top:706px" width="14" height="14" viewBox="0 0 14 14"><g fill="#DDDBDA"><path d="M0.400 13.600l0.900-3.300 2.400 2.400z"/><path d="M2.100 9.500l6.600-6.600 2.400 2.400-6.600 6.600z"/><path d="M9.500 2.100l1-1a0.900 0.900 0 0 1 1.200 0l1.200 1.200a0.900 0.900 0 0 1 0 1.200l-1 1z"/></g></svg>
<div class="abs hr" style="left:37px;top:728px;width:329px"></div>
<div class="abs t lab" style="left:394px;top:300px;height:18px;line-height:18px;font-size:12px;letter-spacing:0.057px;">End To End ID</div>
<svg class="abs" style="left:481px;top:302px" width="14" height="14" viewBox="-0.55 -0.40 14.00 14.00" preserveAspectRatio="none"><circle cx="6.500" cy="6.500" r="6.350" fill="#706E6B"/><rect x="5.500" y="3.300" width="2" height="1.500" fill="#fff"/><path fill="#fff" d="M5.100 5.300h2.400v3.100h.6v.9H4.900v-.9h.7V6.200h-.5z"/></svg>
<div class="abs t " style="left:394px;top:320px;height:21px;line-height:21px;font-size:14px;letter-spacing:0.228px;">ETOEID123456</div>
<svg class="abs" style="left:700px;top:321px" width="14" height="14" viewBox="0 0 14 14"><g fill="#DDDBDA"><path d="M0.400 13.600l0.900-3.300 2.400 2.400z"/><path d="M2.100 9.500l6.600-6.600 2.400 2.400-6.600 6.600z"/><path d="M9.500 2.100l1-1a0.900 0.900 0 0 1 1.200 0l1.200 1.200a0.900 0.900 0 0 1 0 1.200l-1 1z"/></g></svg>
<div class="abs hr" style="left:390px;top:343px;width:329px"></div>
<div class="abs t lab" style="left:394px;top:348px;height:18px;line-height:18px;font-size:12px;letter-spacing:0.116px;">Status</div>
<svg class="abs" style="left:437px;top:350px" width="14" height="14" viewBox="-0.15 -0.40 14.00 14.00" preserveAspectRatio="none"><circle cx="6.500" cy="6.500" r="6.350" fill="#706E6B"/><rect x="5.500" y="3.300" width="2" height="1.500" fill="#fff"/><path fill="#fff" d="M5.100 5.300h2.400v3.100h.6v.9H4.900v-.9h.7V6.200h-.5z"/></svg>
<div class="abs t " style="left:394px;top:368px;height:21px;line-height:21px;font-size:14px;letter-spacing:0.037px;">Processing</div>
<svg class="abs" style="left:700px;top:369px" width="14" height="14" viewBox="0 0 14 14"><g fill="#DDDBDA"><path d="M0.400 13.600l0.900-3.300 2.400 2.400z"/><path d="M2.100 9.500l6.600-6.600 2.400 2.400-6.600 6.600z"/><path d="M9.500 2.100l1-1a0.900 0.900 0 0 1 1.200 0l1.200 1.200a0.900 0.900 0 0 1 0 1.200l-1 1z"/></g></svg>
<div class="abs hr" style="left:390px;top:391px;width:329px"></div>
<div class="abs t lab" style="left:394px;top:396px;height:18px;line-height:18px;font-size:12px;letter-spacing:0.458px;">Actual Amount</div>
<svg class="abs" style="left:487px;top:398px" width="14" height="14" viewBox="-0.35 -0.40 14.00 14.00" preserveAspectRatio="none"><circle cx="6.500" cy="6.500" r="6.350" fill="#706E6B"/><rect x="5.500" y="3.300" width="2" height="1.500" fill="#fff"/><path fill="#fff" d="M5.100 5.300h2.400v3.100h.6v.9H4.900v-.9h.7V6.200h-.5z"/></svg>
<div class="abs t " style="left:394px;top:416px;height:21px;line-height:21px;font-size:14px;letter-spacing:0.78px;">€123.99</div>
<div class="abs hr" style="left:390px;top:439px;width:329px"></div>
<div class="abs t lab" style="left:394px;top:444px;height:18px;line-height:18px;font-size:12px;letter-spacing:0.716px;">Amount</div>
<svg class="abs" style="left:449px;top:446px" width="14" height="14" viewBox="-0.35 -0.40 14.00 14.00" preserveAspectRatio="none"><circle cx="6.500" cy="6.500" r="6.350" fill="#706E6B"/><rect x="5.500" y="3.300" width="2" height="1.500" fill="#fff"/><path fill="#fff" d="M5.100 5.300h2.400v3.100h.6v.9H4.900v-.9h.7V6.200h-.5z"/></svg>
<div class="abs t " style="left:394px;top:464px;height:21px;line-height:21px;font-size:14px;letter-spacing:0.78px;">€123.99</div>
<svg class="abs" style="left:700px;top:465px" width="14" height="14" viewBox="0 0 14 14"><g fill="#DDDBDA"><path d="M0.400 13.600l0.900-3.300 2.400 2.400z"/><path d="M2.100 9.500l6.600-6.600 2.400 2.400-6.600 6.600z"/><path d="M9.500 2.100l1-1a0.900 0.900 0 0 1 1.200 0l1.200 1.200a0.900 0.900 0 0 1 0 1.200l-1 1z"/></g></svg>
<div class="abs hr" style="left:390px;top:487px;width:329px"></div>
<div class="abs t lab" style="left:394px;top:492px;height:18px;line-height:18px;font-size:12px;letter-spacing:0.347px;">Bank Account Number</div>
<svg class="abs" style="left:530px;top:494px" width="14" height="14" viewBox="-0.15 -0.40 14.00 14.00" preserveAspectRatio="none"><circle cx="6.500" cy="6.500" r="6.350" fill="#706E6B"/><rect x="5.500" y="3.300" width="2" height="1.500" fill="#fff"/><path fill="#fff" d="M5.100 5.300h2.400v3.100h.6v.9H4.900v-.9h.7V6.200h-.5z"/></svg>
<div class="abs t " style="left:394px;top:512px;height:21px;line-height:21px;font-size:14px;letter-spacing:0.514px;">NL91ABNA0417164300</div>
<svg class="abs" style="left:700px;top:513px" width="14" height="14" viewBox="0 0 14 14"><g fill="#DDDBDA"><path d="M0.400 13.600l0.900-3.300 2.400 2.400z"/><path d="M2.100 9.500l6.600-6.600 2.400 2.400-6.600 6.600z"/><path d="M9.500 2.100l1-1a0.900 0.900 0 0 1 1.200 0l1.200 1.200a0.900 0.900 0 0 1 0 1.200l-1 1z"/></g></svg>
<div class="abs hr" style="left:390px;top:535px;width:329px"></div>
<div class="abs t lab" style="left:394px;top:540px;height:18px;line-height:18px;font-size:12px;letter-spacing:-0.247px;">Type</div>
<svg class="abs" style="left:429px;top:542px" width="14" height="14" viewBox="-0.45 -0.40 14.00 14.00" preserveAspectRatio="none"><circle cx="6.500" cy="6.500" r="6.350" fill="#706E6B"/><rect x="5.500" y="3.300" width="2" height="1.500" fill="#fff"/><path fill="#fff" d="M5.100 5.300h2.400v3.100h.6v.9H4.900v-.9h.7V6.200h-.5z"/></svg>
<div class="abs t " style="left:394px;top:560px;height:21px;line-height:21px;font-size:14px;letter-spacing:0.509px;">Credit</div>
<svg class="abs" style="left:700px;top:561px" width="14" height="14" viewBox="0 0 14 14"><g fill="#DDDBDA"><path d="M0.400 13.600l0.900-3.300 2.400 2.400z"/><path d="M2.100 9.500l6.600-6.600 2.400 2.400-6.600 6.600z"/><path d="M9.500 2.100l1-1a0.900 0.900 0 0 1 1.200 0l1.200 1.200a0.900 0.900 0 0 1 0 1.200l-1 1z"/></g></svg>
<div class="abs hr" style="left:390px;top:583px;width:329px"></div>
<div class="abs t lab" style="left:394px;top:588px;height:18px;line-height:18px;font-size:12px;letter-spacing:0.087px;">Account Servicer Reference</div>
<svg class="abs" style="left:555px;top:590px" width="14" height="14" viewBox="-0.45 -0.40 14.00 14.00" preserveAspectRatio="none"><circle cx="6.500" cy="6.500" r="6.350" fill="#706E6B"/><rect x="5.500" y="3.300" width="2" height="1.500" fill="#fff"/><path fill="#fff" d="M5.100 5.300h2.400v3.100h.6v.9H4.900v-.9h.7V6.200h-.5z"/></svg>
<svg class="abs" style="left:700px;top:610px" width="14" height="14" viewBox="0 0 14 14"><g fill="#DDDBDA"><path d="M0.400 13.600l0.900-3.300 2.400 2.400z"/><path d="M2.100 9.500l6.600-6.600 2.400 2.400-6.600 6.600z"/><path d="M9.500 2.100l1-1a0.900 0.900 0 0 1 1.200 0l1.200 1.200a0.900 0.900 0 0 1 0 1.200l-1 1z"/></g></svg>
<div class="abs hr" style="left:390px;top:632px;width:329px"></div>
<div class="abs t lab" style="left:394px;top:637px;height:18px;line-height:18px;font-size:12px;letter-spacing:0.449px;">Batch Id</div>
<svg class="abs" style="left:700px;top:658px" width="14" height="14" viewBox="0 0 14 14"><g fill="#DDDBDA"><path d="M0.400 13.600l0.900-3.300 2.400 2.400z"/><path d="M2.100 9.500l6.600-6.600 2.400 2.400-6.600 6.600z"/><path d="M9.500 2.100l1-1a0.900 0.900 0 0 1 1.200 0l1.200 1.200a0.900 0.900 0 0 1 0 1.200l-1 1z"/></g></svg>
<div class="abs hr" style="left:390px;top:680px;width:329px"></div>
<div class="abs t lab" style="left:394px;top:685px;height:18px;line-height:18px;font-size:12px;letter-spacing:0.382px;">Guided Matching Job Id</div>
<div class="abs t " style="left:394px;top:705px;height:21px;line-height:21px;font-size:14px;letter-spacing:0.693px;">7073N00000tuiSpQAI</div>
<svg class="abs" style="left:700px;top:706px" width="14" height="14" viewBox="0 0 14 14"><g fill="#DDDBDA"><path d="M0.400 13.600l0.900-3.300 2.400 2.400z"/><path d="M2.100 9.500l6.600-6.600 2.400 2.400-6.600 6.600z"/><path d="M9.500 2.100l1-1a0.900 0.900 0 0 1 1.200 0l1.200 1.200a0.900 0.900 0 0 1 0 1.200l-1 1z"/></g></svg>
<div class="abs hr" style="left:390px;top:728px;width:329px"></div>
</div></body></html>
